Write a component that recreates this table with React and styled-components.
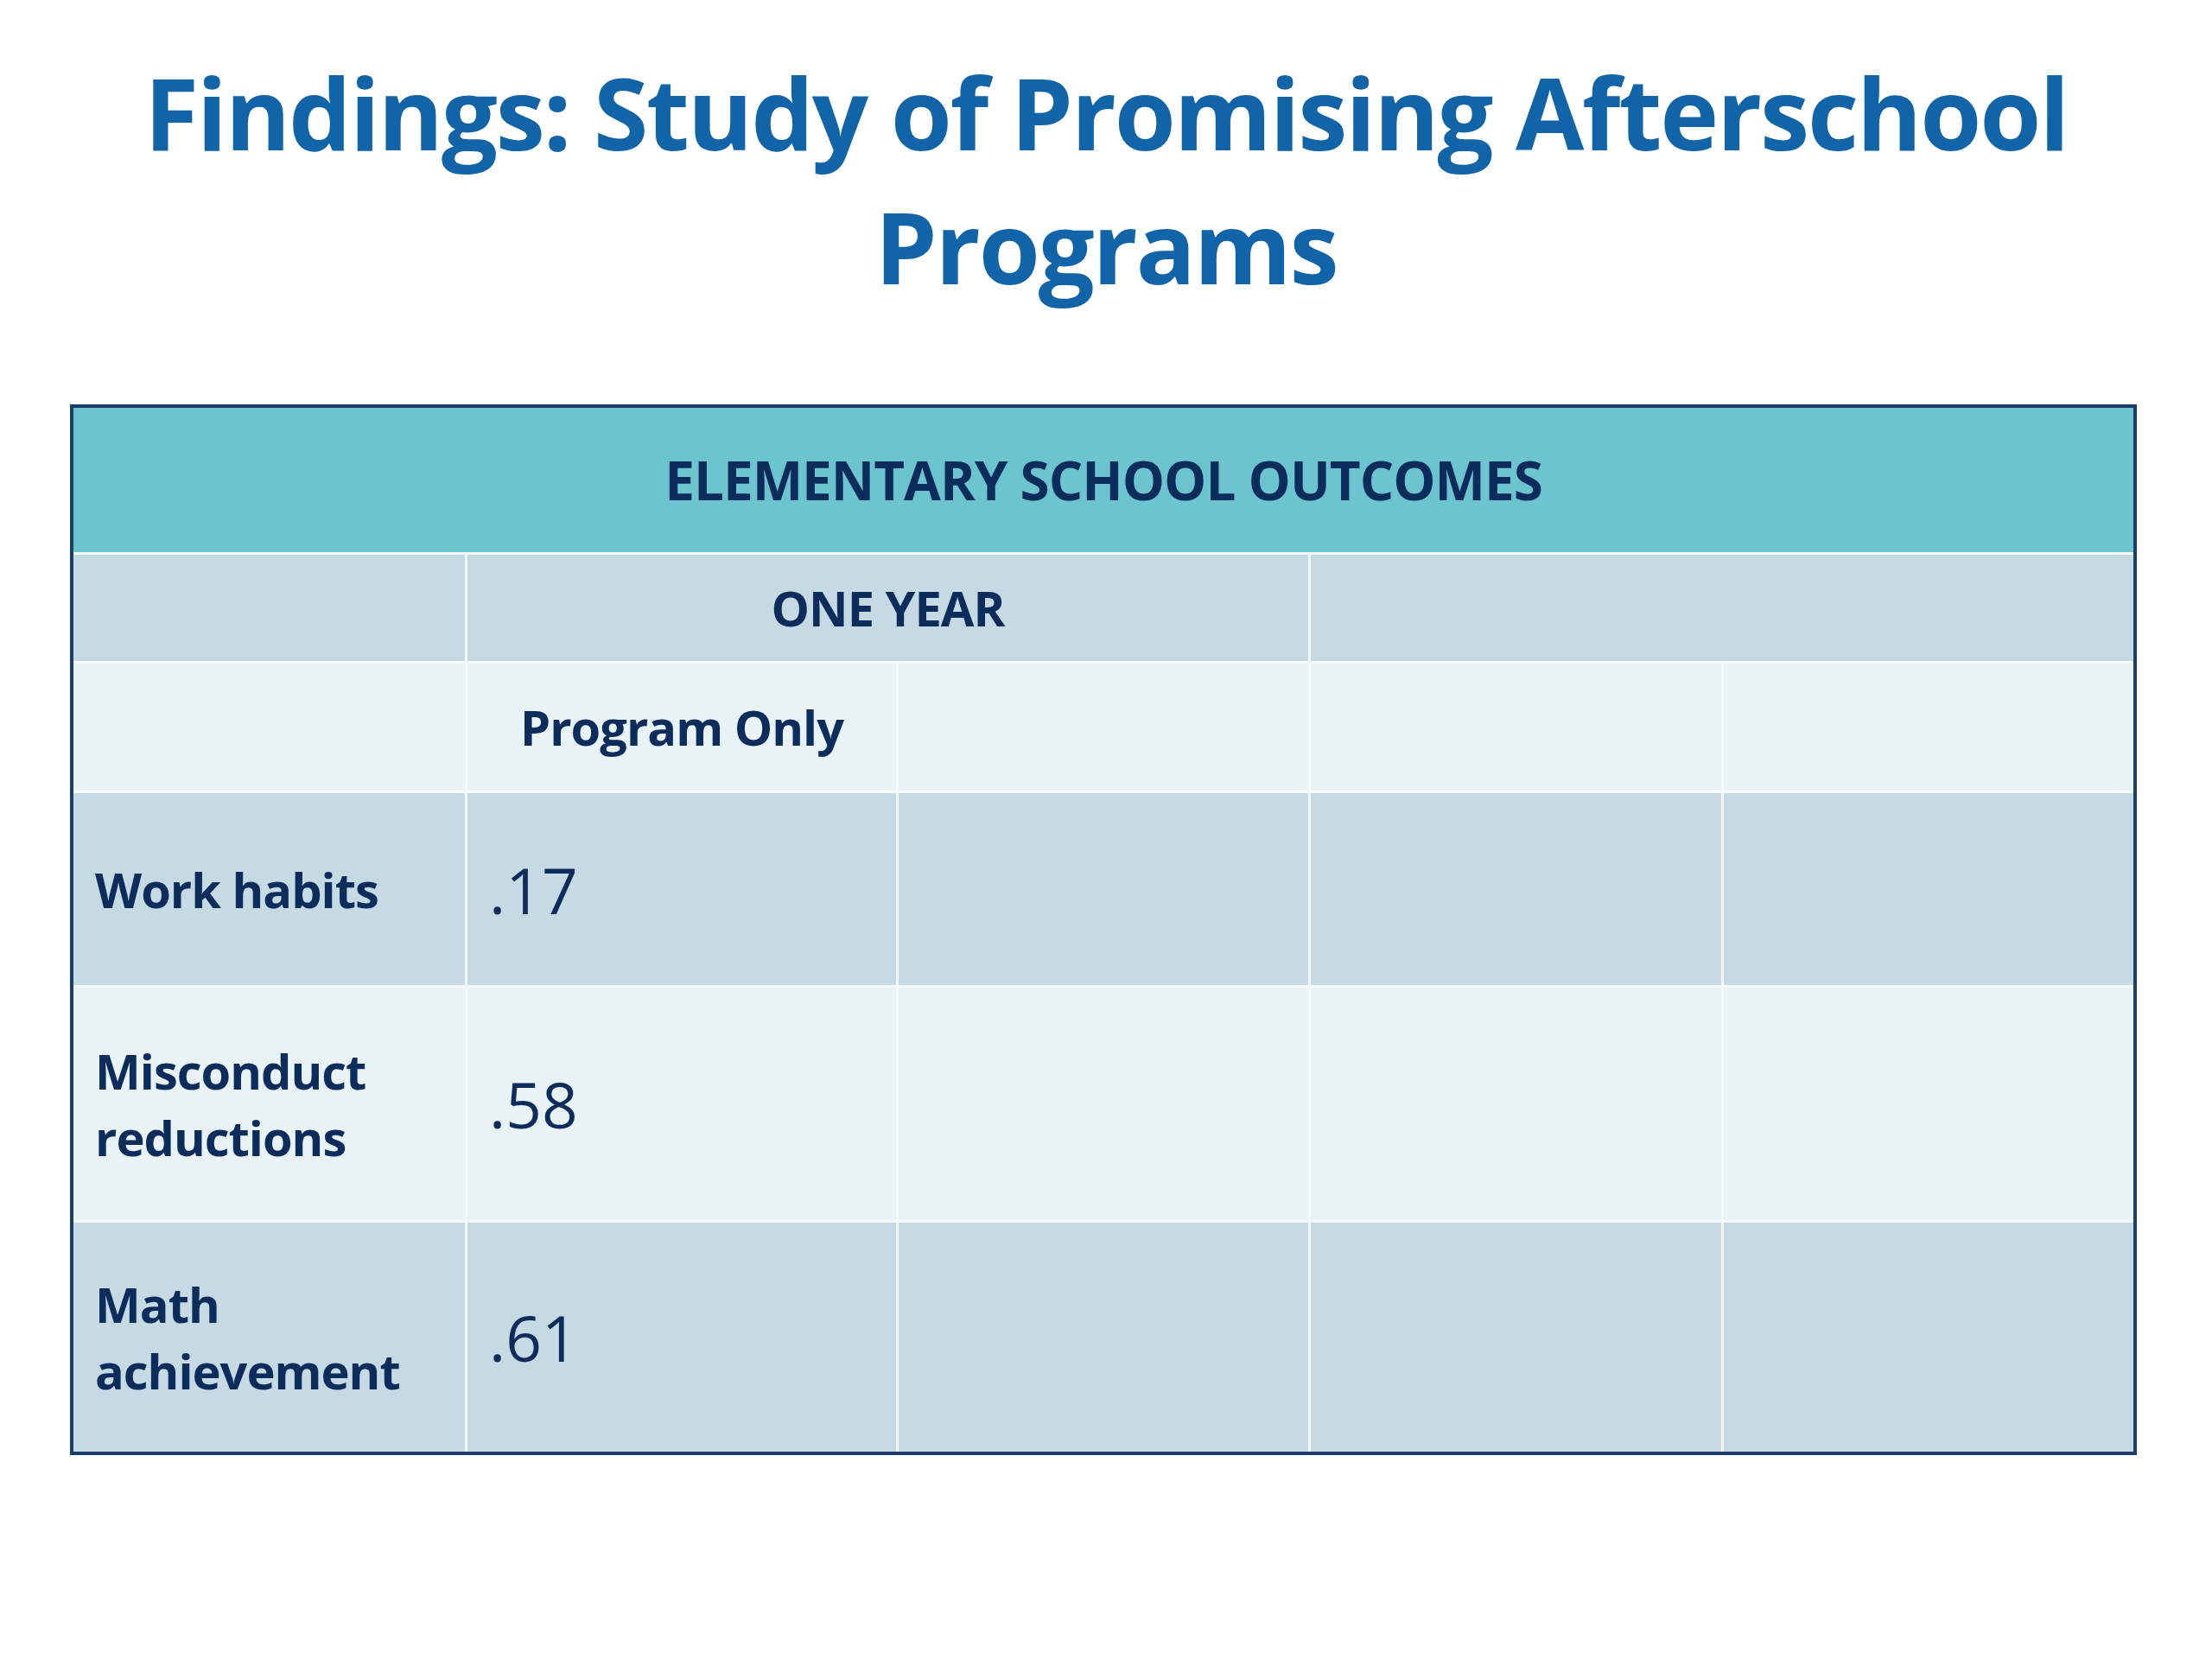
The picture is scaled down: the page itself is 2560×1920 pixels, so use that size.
import React from 'react';
import styled, { createGlobalStyle } from 'styled-components';

const GlobalStyle = createGlobalStyle`
    html, body {
        margin: 0;
        padding: 0;
        background: #ffffff;
    }
    body {
        font-family: "Open Sans", "Noto Sans", "Liberation Sans", sans-serif;
    }
`;

const Page = styled.main`
    width: 2560px;
    min-height: 1920px;
    padding-top: 52px;
    box-sizing: border-box;
`;

const Title = styled.h1`
    margin: 0;
    text-align: center;
    font-family: "Open Sans", "Noto Sans", sans-serif;
    font-weight: 700;
    font-size: 115px;
    line-height: 155px;
    letter-spacing: -2.2px;
    color: #1264a8;
`;

const Table = styled.section`
    margin: 106px 0 0 81px;
    display: grid;
    grid-template-columns: 453px 496px 474px 475px 474px;
    grid-template-rows: 167px 123px 147px 222px 269px 265px;
    gap: 3px;
    width: max-content;
    background: #f4fafc;
    border: 4px solid #1b3e6e;
`;

const tones = {
    head: '#6cc4ce',
    dark: '#c5dae3',
    light: '#e9f3f6',
};

const Cell = styled.div`
    grid-column: span ${(props) => props.$span || 1};
    background: ${(props) => tones[props.$tone]};
    display: flex;
    align-items: center;
    justify-content: ${(props) => (props.$center ? 'center' : 'flex-start')};
    padding: 0 25px;
    box-sizing: border-box;
    color: #0c2c5c;
    font-weight: 700;
    font-size: ${(props) => (props.$tone === 'head' ? '62px' : '56px')};
    line-height: 77px;
    letter-spacing: -1px;
`;

const Value = styled.span`
    font-weight: 400;
    font-size: 73px;
    letter-spacing: 0;
`;

const rows = [
    { label: ['Work habits'], value: '.17', tone: 'dark' },
    { label: ['Misconduct', 'reductions'], value: '.58', tone: 'light' },
    { label: ['Math', 'achievement'], value: '.61', tone: 'dark' },
];

const App = () => {
    return (
        <Page>
            <GlobalStyle />
            <Title>
                Findings: Study of Promising Afterschool
                <br />
                Programs
            </Title>
            <Table>
                <Cell $tone="head" $span={5} $center>
                    ELEMENTARY SCHOOL OUTCOMES
                </Cell>

                <Cell $tone="dark" />
                <Cell $tone="dark" $span={2} $center>
                    ONE YEAR
                </Cell>
                <Cell $tone="dark" $span={2} />

                <Cell $tone="light" />
                <Cell $tone="light" $center>
                    Program Only
                </Cell>
                <Cell $tone="light" />
                <Cell $tone="light" />
                <Cell $tone="light" />

                {rows.map((row) => (
                    <React.Fragment key={row.value}>
                        <Cell $tone={row.tone}>
                            <span>
                                {row.label.map((line, i) => (
                                    <React.Fragment key={line}>
                                        {i > 0 && <br />}
                                        {line}
                                    </React.Fragment>
                                ))}
                            </span>
                        </Cell>
                        <Cell $tone={row.tone}>
                            <Value>{row.value}</Value>
                        </Cell>
                        <Cell $tone={row.tone} />
                        <Cell $tone={row.tone} />
                        <Cell $tone={row.tone} />
                    </React.Fragment>
                ))}
            </Table>
        </Page>
    );
};

export default App;
